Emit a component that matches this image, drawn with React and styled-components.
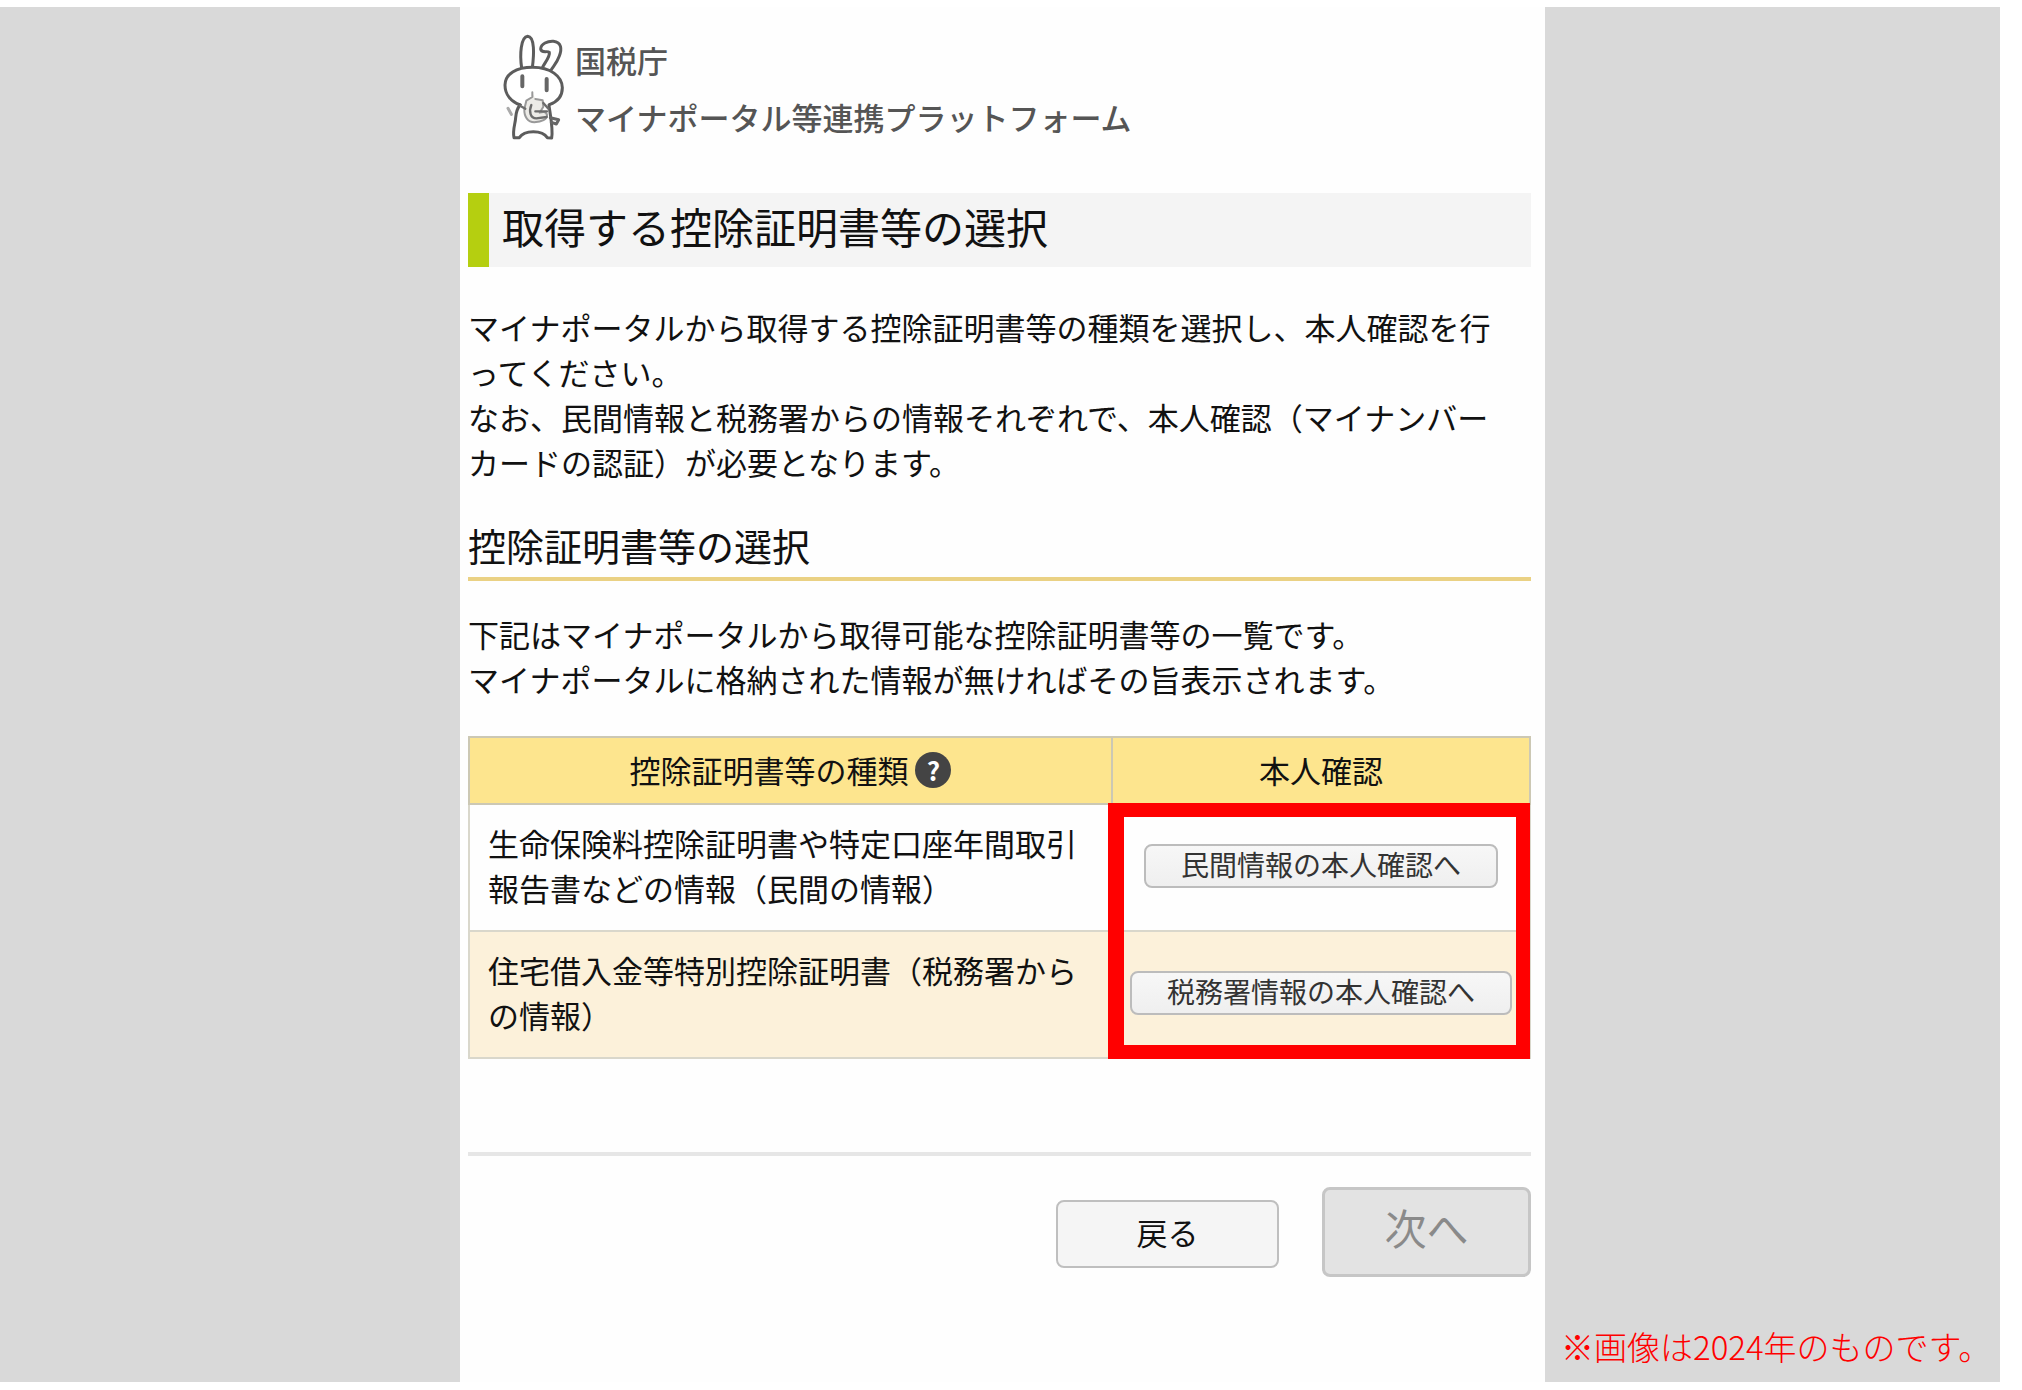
import React from "react";
import styled, { createGlobalStyle } from "styled-components";

const GlobalStyle = createGlobalStyle`
  *, *::before, *::after { box-sizing: border-box; }
  body {
    margin: 0;
    background: #fff;
    color: #111;
    font-family: "Noto Sans CJK JP", "Noto Sans", sans-serif;
    font-size: 31px;
    line-height: 45px;
  }
  h1, h2, p { margin: 0; font-weight: 400; }
  button { font-family: inherit; }
`;

const Stage = styled.div`
  display: flex;
  min-height: calc(100vh - 15px);
  margin: 7px 22px 8px 0;
  padding-left: 22.75%;
  background: #d9d9d9;
`;

const Panel = styled.main`
  flex: 0 1 1085px;
  padding: 24px 14px 0 8px;
  background: #fefefe;
`;

const Brand = styled.header`
  display: flex;
  align-items: center;
  gap: 8px;
  padding-left: 35px;
`;

const Mascot = styled.svg`
  flex: none;
  width: 64px;
  height: 108px;
`;

const BrandText = styled.p`
  color: #555;
  font-weight: 500;
  line-height: 57px;
`;

const PageTitle = styled.h1`
  margin-top: 48px;
  padding: 2px 0 10px 13px;
  border-left: 21px solid #b5cf10;
  background: #f4f4f4;
  font-size: 42px;
  line-height: 62px;
`;

const Paragraph = styled.p`
  margin-top: ${(p) => p.$space}px;
`;

const SectionTitle = styled.h2`
  margin-top: 33px;
  padding-bottom: 4px;
  border-bottom: 4px solid #ead184;
  font-size: 38px;
  line-height: 56px;
`;

const TableArea = styled.div`
  position: relative;
  margin-top: 35px;
`;

const Table = styled.table`
  width: 100%;
  border-collapse: collapse;
  table-layout: fixed;
`;

const TypeColumn = styled.col`
  width: 60.6%;
`;

const HeadCell = styled.th`
  padding: 9px 0 11px;
  border: 2px solid #ccc8b4;
  background: #fde58e;
  font-weight: 400;
`;

const HeadLabel = styled.span`
  display: flex;
  align-items: center;
  justify-content: center;
  gap: 7px;
`;

const HelpButton = styled.button`
  width: 36px;
  height: 36px;
  padding: 0;
  border: 0;
  border-radius: 50%;
  background: #444;
  color: #fff;
  font-size: 26px;
  font-weight: 700;
  line-height: 34px;
`;

const Row = styled.tr`
  background: ${(p) => (p.$shaded ? "#fcf1da" : "#fefefe")};
`;

const Cell = styled.td`
  padding: 15px 18px 20px;
  border: 2px solid #d9d7cb;
`;

const ActionCell = styled(Cell)`
  padding: 0 0 8px;
  text-align: center;
`;

const VerifyButton = styled.button`
  height: 44px;
  padding: 0 35px 4px;
  border: 2px solid #bcbcbc;
  border-radius: 8px;
  background: linear-gradient(#f7f7f7, #efefef);
  color: #333;
  font-size: 28px;
  line-height: 34px;
  white-space: nowrap;
  vertical-align: middle;
`;

const Highlight = styled.div`
  position: absolute;
  top: 67px;
  right: 1px;
  bottom: 0;
  width: 422px;
  border: 14px solid #f00;
  border-left-width: 16px;
  pointer-events: none;
`;

const Actions = styled.footer`
  display: flex;
  align-items: baseline;
  justify-content: flex-end;
  gap: 43px;
  margin-top: 93px;
  padding-top: 31px;
  border-top: 4px solid #e6e6e6;
`;

const BackButton = styled.button`
  width: 223px;
  height: 68px;
  padding: 0 0 6px;
  border: 2px solid #bfbfbf;
  border-radius: 8px;
  background: #f5f5f5;
  color: #111;
  font-size: 31px;
`;

const NextButton = styled.button`
  width: 209px;
  height: 90px;
  padding: 0 0 12px;
  border: 3px solid #c6c6c6;
  border-radius: 8px;
  background: #e3e3e3;
  color: #8a8a8a;
  font-size: 42px;
`;

const Side = styled.aside`
  display: flex;
  flex: 1;
  align-items: flex-end;
  padding: 0 0 12px 16px;
`;

const Note = styled.p`
  color: #f00;
  font-size: 33px;
  font-weight: 300;
  line-height: 48px;
  white-space: nowrap;
`;

function Rabbit() {
  return (
    <Mascot viewBox="69 39 192 324" fill="none" stroke="#5c5c5c" strokeWidth="9" strokeLinecap="round" strokeLinejoin="round" aria-hidden="true">
      <path d="M125 141C119 102 122 48 143 46C165 47 162 102 157 140" fill="#fff" />
      <path d="M188 138C199 119 211 104 208 94C202 88 184 98 182 84C183 68 203 60 220 61C245 64 246 84 238 105C230 127 221 134 212 149" fill="#fff" />
      <path d="M121 252C93 242 75 220 75 192C76 158 108 139 158 139C211 139 246 165 247 200C247 225 233 242 208 251" fill="#fff" />
      <path d="M127 166V196M200 174V208" strokeWidth="12" stroke="#666" />
      <path d="M120 252C112 262 108 276 107 290C106 310 97 326 102 350L118 350C133 326 187 326 202 350L215 351C220 325 211 283 207 253" fill="#fff" />
      <path d="M84 262L94 280" stroke="#aaa" strokeWidth="9" />
      <path d="M211 290L236 296L229 309L214 304" stroke="#666" />
      <path d="M157 214V228L139 239L133 264C132 288 144 303 163 304C184 302 203 296 201 282C199 271 188 272 179 275L190 257L188 238L166 234" fill="#ecebe7" stroke="#999" strokeWidth="6" />
      <path d="M154 252C146 271 151 292 169 292L200 288M166 271H201M120 254L136 263M190 246L205 263" stroke="#6c6c6c" strokeWidth="7" />
    </Mascot>
  );
}

const rows = [
  {
    lines: ["生命保険料控除証明書や特定口座年間取引", "報告書などの情報（民間の情報）"],
    action: "民間情報の本人確認へ",
  },
  {
    lines: ["住宅借入金等特別控除証明書（税務署から", "の情報）"],
    action: "税務署情報の本人確認へ",
  },
];

export default function App() {
  return (
    <>
      <GlobalStyle />
      <Stage lang="ja">
        <Panel>
          <Brand>
            <Rabbit />
            <BrandText>
              国税庁
              <br />
              マイナポータル等連携プラットフォーム
            </BrandText>
          </Brand>

          <PageTitle>取得する控除証明書等の選択</PageTitle>
          <Paragraph $space={37}>
            マイナポータルから取得する控除証明書等の種類を選択し、本人確認を行
            <br />
            ってください。
            <br />
            なお、民間情報と税務署からの情報それぞれで、本人確認（マイナンバー
            <br />
            カードの認証）が必要となります。
          </Paragraph>

          <SectionTitle>控除証明書等の選択</SectionTitle>
          <Paragraph $space={30}>
            下記はマイナポータルから取得可能な控除証明書等の一覧です。
            <br />
            マイナポータルに格納された情報が無ければその旨表示されます。
          </Paragraph>

          <TableArea>
            <Table>
              <colgroup>
                <TypeColumn />
                <col />
              </colgroup>
              <thead>
                <tr>
                  <HeadCell scope="col">
                    <HeadLabel>
                      控除証明書等の種類
                      <HelpButton type="button">?</HelpButton>
                    </HeadLabel>
                  </HeadCell>
                  <HeadCell scope="col">本人確認</HeadCell>
                </tr>
              </thead>
              <tbody>
                {rows.map((row, i) => (
                  <Row key={row.action} $shaded={i % 2 === 1}>
                    <Cell>
                      {row.lines[0]}
                      <br />
                      {row.lines[1]}
                    </Cell>
                    <ActionCell>
                      <VerifyButton type="button">{row.action}</VerifyButton>
                    </ActionCell>
                  </Row>
                ))}
              </tbody>
            </Table>
            <Highlight />
          </TableArea>

          <Actions>
            <BackButton type="button">戻る</BackButton>
            <NextButton type="button" disabled>
              次へ
            </NextButton>
          </Actions>
        </Panel>
        <Side>
          <Note>※画像は2024年のものです。</Note>
        </Side>
      </Stage>
    </>
  );
}
